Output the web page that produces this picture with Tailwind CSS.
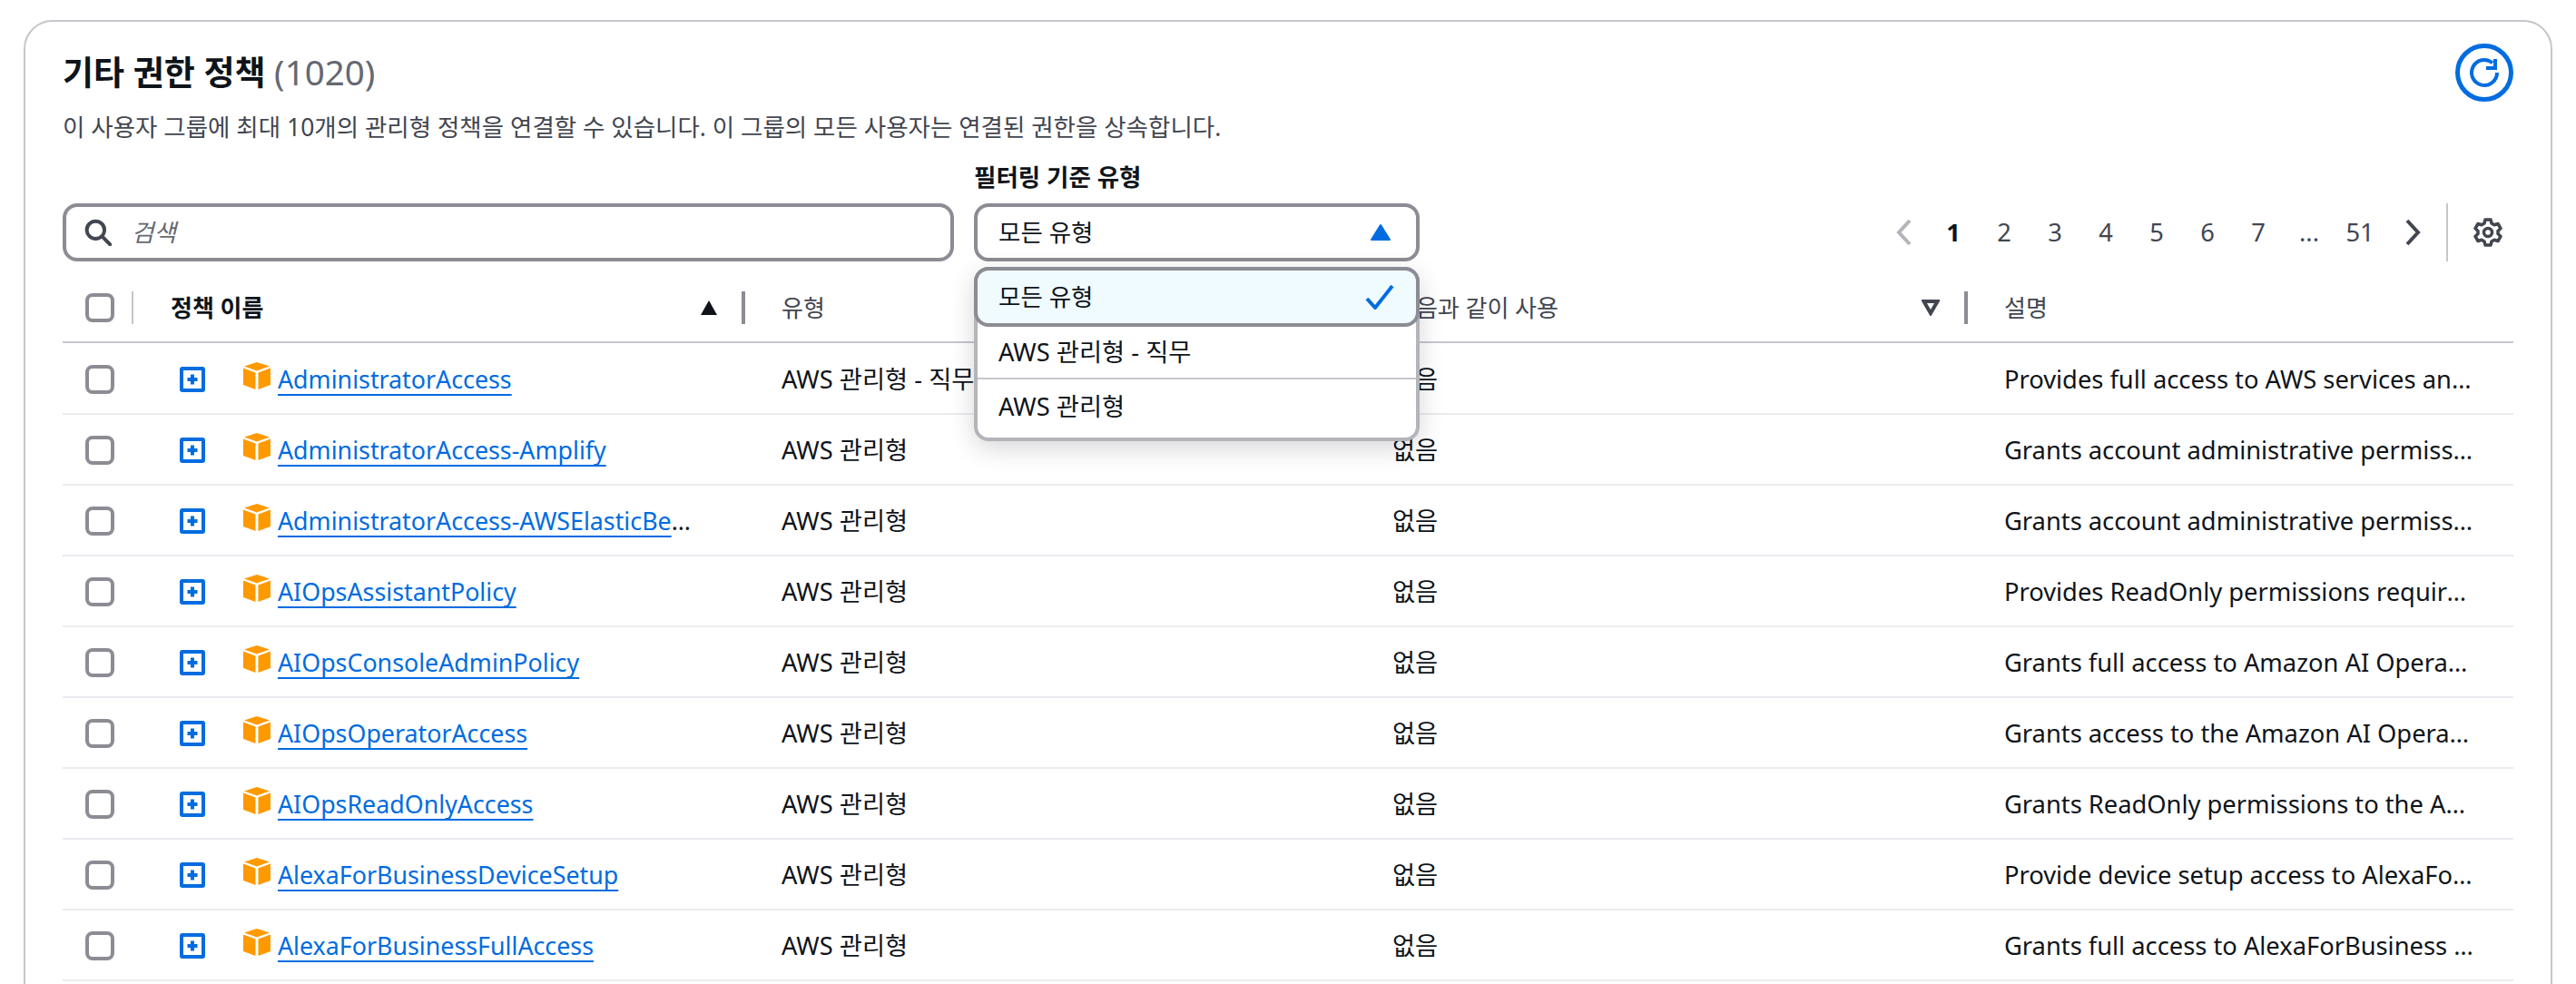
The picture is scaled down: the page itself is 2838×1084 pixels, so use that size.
<!DOCTYPE html>
<html lang="ko">
<head>
<meta charset="utf-8">
<script src="https://cdn.jsdelivr.net/npm/@tailwindcss/browser@4"></script>
</head>
<body class="bg-white overflow-hidden h-[1084px] font-['Noto_Sans','Noto_Sans_CJK_KR',sans-serif] text-[27.3px] leading-[40px] text-[#0f141a]">
<svg width="0" height="0" class="hidden">
  <symbol id="cube" viewBox="0 0 30 30">
    <polygon points="15,0 29,4.500 15,9.500 1,4.500" fill="#ff9900"/>
    <polygon points="0,6.500 13.500,11.500 13.500,30 0,25" fill="#ff9900"/>
    <polygon points="30,6.500 16.500,11.500 16.500,30 30,25" fill="#ff9900"/>
  </symbol>
  <symbol id="plus" viewBox="0 0 28 28">
    <rect x="2" y="2" width="24" height="24" rx="1" fill="none" stroke="#006ce0" stroke-width="4"/>
    <path d="M14 8.500v11M8.500 14h11" fill="none" stroke="#006ce0" stroke-width="4"/>
  </symbol>
</svg>
<div class="mt-[22px] mx-[26px] w-[2786px] h-[1200px] border-2 border-[#c6c6cd] rounded-[32px] pl-[41px] pr-[41px]">
  <div class="flex justify-between items-start pt-[24px]">
    <div class="mt-[9px]">
      <h2 class="h-[44px] text-[37px] leading-[44px] font-bold">기타 권한 정책 <span class="font-normal text-[38.500px] text-[#656871]">(1020)</span></h2>
      <p class="mt-[19px] text-[26.500px] leading-[40px] text-[#424650]">이 사용자 그룹에 최대 10개의 관리형 정책을 연결할 수 있습니다. 이 그룹의 모든 사용자는 연결된 권한을 상속합니다.</p>
    </div>
    <button class="w-[64px] h-[64px] rounded-full border-[5px] border-[#006ce0] flex items-center justify-center">
      <svg width="34" height="34" viewBox="0 0 34 34" fill="none" stroke="#006ce0" stroke-width="4"><path d="M31 17a14 14 0 1 1-5-10.700"/><path d="M29 2v10H19"/></svg>
    </button>
  </div>
  <div class="flex items-end mt-[15px]">
    <div class="w-[982px] h-[64px] border-4 border-[#8c8c94] rounded-[16px] flex items-center pl-[20px] shrink-0">
      <svg width="30" height="30" viewBox="0 0 34 34" fill="none" stroke="#424650" stroke-width="4.500"><circle cx="14" cy="14" r="11"/><path d="M22 22l10 10" stroke-linecap="round"/></svg>
      <span class="ml-[22px] italic text-[26.500px] text-[#656871]">검색</span>
    </div>
    <div class="ml-[22px] w-[491px] shrink-0 relative">
      <div class="text-[26.500px] leading-[40px] font-bold mb-[9px]">필터링 기준 유형</div>
      <div class="h-[64px] border-4 border-[#8c8c94] rounded-[16px] flex items-center justify-between pl-[23px] pr-[28px]">
        <span class="text-[26.500px]">모든 유형</span>
        <svg width="22" height="18" viewBox="0 0 22 18"><path d="M11 1L21 17H1z" fill="#006ce0" stroke="#006ce0" stroke-linejoin="round" stroke-width="2"/></svg>
      </div>
      <div class="absolute left-0 right-0 top-[119px] z-10 h-[192px] bg-white border-4 border-[#b4b4bb] rounded-[16px] shadow-[0_8px_28px_rgba(0,7,22,0.16)]">
        <div class="-mx-[4px] -mt-[4px] h-[66px] bg-[#f0fbff] border-4 border-[#8c8c94] rounded-[16px] flex items-center justify-between pl-[23px] pr-[24px]">
          <span class="text-[26.500px]">모든 유형</span>
          <svg width="32" height="28" viewBox="0 0 32 28" fill="none" stroke="#006ce0" stroke-width="4"><path d="M2 16l9 10L30 2"/></svg>
        </div>
        <div class="h-[58px] border-b-2 border-[#c6c6cd] flex items-center pl-[23px]">AWS 관리형 - 직무</div>
        <div class="h-[58px] pt-[2px] flex items-center pl-[23px]">AWS 관리형</div>
      </div>
    </div>
    <div class="flex-1 h-[64px] flex items-center justify-end text-[#424650]">
      <div class="flex items-center">
        <svg width="20" height="32" viewBox="0 0 20 32" fill="none" stroke="#b4b4bb" stroke-width="4" class="mr-[16px]"><path d="M16 3L4 16l12 13"/></svg>
        <span class="w-[56px] text-center font-bold text-[#0f141a]">1</span>
        <span class="w-[56px] text-center">2</span>
        <span class="w-[56px] text-center">3</span>
        <span class="w-[56px] text-center">4</span>
        <span class="w-[56px] text-center">5</span>
        <span class="w-[56px] text-center">6</span>
        <span class="w-[56px] text-center">7</span>
        <span class="w-[56px] text-center">...</span>
        <span class="w-[56px] text-center">51</span>
        <svg width="20" height="32" viewBox="0 0 20 32" fill="none" stroke="#424650" stroke-width="4" class="ml-[20px]"><path d="M4 3l12 13L4 29"/></svg>
      </div>
      <div class="w-[2px] h-[64px] bg-[#c6c6cd] ml-[27px]"></div>
      <svg width="32" height="32" viewBox="0 0 32 32" fill="none" stroke="#424650" stroke-width="3.500" stroke-linejoin="round" class="ml-[28px] mr-[12px]"><circle cx="16" cy="16" r="4.500"/><path d="M13 2h6l1 4 3 1.700 4-1.200 3 5.100-3 2.900v3l3 2.900-3 5.100-4-1.200-3 1.700-1 4h-6l-1-4-3-1.700-4 1.200-3-5.100 3-2.900v-3l-3-2.900 3-5.100 4 1.200 3-1.700z"/></svg>
    </div>
  </div>
  <div class="mt-[13px] h-[75px] box-content border-b-2 border-[#c6c6cd] flex items-center font-bold">
    <div class="w-[78px] shrink-0 h-[36px] flex items-center pl-[25px] border-r-2 border-[#c6c6cd]">
      <span class="block w-[32px] h-[32px] border-4 border-[#8c8c94] rounded-[8px]"></span>
    </div>
    <div class="w-[674px] shrink-0 h-[36px] flex items-center justify-between pl-[41px] pr-[26px] border-r-4 border-[#8c8c94] text-[26px]">
      <span>정책 이름</span>
      <svg width="20" height="18" viewBox="0 0 20 18"><path d="M10 1l9 16H1z" fill="#0f141a"/></svg>
    </div>
    <div class="w-[673px] shrink-0 h-[36px] flex items-center pl-[40px] text-[26px] font-normal text-[#424650]">유형</div>
    <div class="w-[674px] shrink-0 h-[36px] flex items-center justify-between pl-[42px] pr-[27px] border-r-4 border-[#8c8c94] text-[26px] font-normal text-[#424650]">
      <span>다음과 같이 사용</span>
      <svg width="20" height="18" viewBox="0 0 20 18" fill="none" stroke="#424650" stroke-width="4"><path d="M2.500 2h15L10 15z"/></svg>
    </div>
    <div class="pl-[40px] text-[26px] font-normal text-[#424650]">설명</div>
  </div>

  <div class="h-[79px] pt-[2px] border-b-2 border-[#ebebf0] flex items-center"><div class="w-[76px] shrink-0 pl-[25px]"><span class="block w-[32px] h-[32px] border-4 border-[#8c8c94] rounded-[8px]"></span></div><svg width="28" height="28" class="ml-[53px] shrink-0"><use href="#plus"/></svg><svg width="30" height="30" class="ml-[42px] -mt-[8px] shrink-0"><use href="#cube"/></svg><div class="w-[467px] ml-[8px] shrink-0 truncate text-[26.800px]"><span class="text-[#006ce0] underline underline-offset-[6px] decoration-2">AdministratorAccess</span></div><div class="w-[673px] ml-[88px] shrink-0 truncate pr-[40px]">AWS 관리형 - 직무</div><div class="w-[674px] shrink-0">없음</div><div class="flex-1 min-w-0 truncate pr-[42px]">Provides full access to AWS services and resources.</div></div>
  <div class="h-[78px] pt-[2px] border-b-2 border-[#ebebf0] flex items-center"><div class="w-[76px] shrink-0 pl-[25px]"><span class="block w-[32px] h-[32px] border-4 border-[#8c8c94] rounded-[8px]"></span></div><svg width="28" height="28" class="ml-[53px] shrink-0"><use href="#plus"/></svg><svg width="30" height="30" class="ml-[42px] -mt-[8px] shrink-0"><use href="#cube"/></svg><div class="w-[467px] ml-[8px] shrink-0 truncate text-[26.800px]"><span class="text-[#006ce0] underline underline-offset-[6px] decoration-2">AdministratorAccess-Amplify</span></div><div class="w-[673px] ml-[88px] shrink-0 truncate pr-[40px]">AWS 관리형</div><div class="w-[674px] shrink-0">없음</div><div class="flex-1 min-w-0 truncate pr-[42px]">Grants account administrative permissions while</div></div>
  <div class="h-[78px] pt-[2px] border-b-2 border-[#ebebf0] flex items-center"><div class="w-[76px] shrink-0 pl-[25px]"><span class="block w-[32px] h-[32px] border-4 border-[#8c8c94] rounded-[8px]"></span></div><svg width="28" height="28" class="ml-[53px] shrink-0"><use href="#plus"/></svg><svg width="30" height="30" class="ml-[42px] -mt-[8px] shrink-0"><use href="#cube"/></svg><div class="w-[467px] ml-[8px] shrink-0 truncate text-[26.800px]"><span class="text-[#006ce0] underline underline-offset-[6px] decoration-2">AdministratorAccess-AWSElasticBeanstalk</span></div><div class="w-[673px] ml-[88px] shrink-0 truncate pr-[40px]">AWS 관리형</div><div class="w-[674px] shrink-0">없음</div><div class="flex-1 min-w-0 truncate pr-[42px]">Grants account administrative permissions</div></div>
  <div class="h-[78px] pt-[2px] border-b-2 border-[#ebebf0] flex items-center"><div class="w-[76px] shrink-0 pl-[25px]"><span class="block w-[32px] h-[32px] border-4 border-[#8c8c94] rounded-[8px]"></span></div><svg width="28" height="28" class="ml-[53px] shrink-0"><use href="#plus"/></svg><svg width="30" height="30" class="ml-[42px] -mt-[8px] shrink-0"><use href="#cube"/></svg><div class="w-[467px] ml-[8px] shrink-0 truncate text-[26.800px]"><span class="text-[#006ce0] underline underline-offset-[6px] decoration-2">AIOpsAssistantPolicy</span></div><div class="w-[673px] ml-[88px] shrink-0 truncate pr-[40px]">AWS 관리형</div><div class="w-[674px] shrink-0">없음</div><div class="flex-1 min-w-0 truncate pr-[42px]">Provides ReadOnly permissions required by the</div></div>
  <div class="h-[78px] pt-[2px] border-b-2 border-[#ebebf0] flex items-center"><div class="w-[76px] shrink-0 pl-[25px]"><span class="block w-[32px] h-[32px] border-4 border-[#8c8c94] rounded-[8px]"></span></div><svg width="28" height="28" class="ml-[53px] shrink-0"><use href="#plus"/></svg><svg width="30" height="30" class="ml-[42px] -mt-[8px] shrink-0"><use href="#cube"/></svg><div class="w-[467px] ml-[8px] shrink-0 truncate text-[26.800px]"><span class="text-[#006ce0] underline underline-offset-[6px] decoration-2">AIOpsConsoleAdminPolicy</span></div><div class="w-[673px] ml-[88px] shrink-0 truncate pr-[40px]">AWS 관리형</div><div class="w-[674px] shrink-0">없음</div><div class="flex-1 min-w-0 truncate pr-[42px]">Grants full access to Amazon AI Operations</div></div>
  <div class="h-[78px] pt-[2px] border-b-2 border-[#ebebf0] flex items-center"><div class="w-[76px] shrink-0 pl-[25px]"><span class="block w-[32px] h-[32px] border-4 border-[#8c8c94] rounded-[8px]"></span></div><svg width="28" height="28" class="ml-[53px] shrink-0"><use href="#plus"/></svg><svg width="30" height="30" class="ml-[42px] -mt-[8px] shrink-0"><use href="#cube"/></svg><div class="w-[467px] ml-[8px] shrink-0 truncate text-[26.800px]"><span class="text-[#006ce0] underline underline-offset-[6px] decoration-2">AIOpsOperatorAccess</span></div><div class="w-[673px] ml-[88px] shrink-0 truncate pr-[40px]">AWS 관리형</div><div class="w-[674px] shrink-0">없음</div><div class="flex-1 min-w-0 truncate pr-[42px]">Grants access to the Amazon AI Operations</div></div>
  <div class="h-[78px] pt-[2px] border-b-2 border-[#ebebf0] flex items-center"><div class="w-[76px] shrink-0 pl-[25px]"><span class="block w-[32px] h-[32px] border-4 border-[#8c8c94] rounded-[8px]"></span></div><svg width="28" height="28" class="ml-[53px] shrink-0"><use href="#plus"/></svg><svg width="30" height="30" class="ml-[42px] -mt-[8px] shrink-0"><use href="#cube"/></svg><div class="w-[467px] ml-[8px] shrink-0 truncate text-[26.800px]"><span class="text-[#006ce0] underline underline-offset-[6px] decoration-2">AIOpsReadOnlyAccess</span></div><div class="w-[673px] ml-[88px] shrink-0 truncate pr-[40px]">AWS 관리형</div><div class="w-[674px] shrink-0">없음</div><div class="flex-1 min-w-0 truncate pr-[42px]">Grants ReadOnly permissions to the Amazon AI</div></div>
  <div class="h-[78px] pt-[2px] border-b-2 border-[#ebebf0] flex items-center"><div class="w-[76px] shrink-0 pl-[25px]"><span class="block w-[32px] h-[32px] border-4 border-[#8c8c94] rounded-[8px]"></span></div><svg width="28" height="28" class="ml-[53px] shrink-0"><use href="#plus"/></svg><svg width="30" height="30" class="ml-[42px] -mt-[8px] shrink-0"><use href="#cube"/></svg><div class="w-[467px] ml-[8px] shrink-0 truncate text-[26.800px]"><span class="text-[#006ce0] underline underline-offset-[6px] decoration-2">AlexaForBusinessDeviceSetup</span></div><div class="w-[673px] ml-[88px] shrink-0 truncate pr-[40px]">AWS 관리형</div><div class="w-[674px] shrink-0">없음</div><div class="flex-1 min-w-0 truncate pr-[42px]">Provide device setup access to AlexaForBusiness</div></div>
  <div class="h-[78px] pt-[2px] border-b-2 border-[#ebebf0] flex items-center"><div class="w-[76px] shrink-0 pl-[25px]"><span class="block w-[32px] h-[32px] border-4 border-[#8c8c94] rounded-[8px]"></span></div><svg width="28" height="28" class="ml-[53px] shrink-0"><use href="#plus"/></svg><svg width="30" height="30" class="ml-[42px] -mt-[8px] shrink-0"><use href="#cube"/></svg><div class="w-[467px] ml-[8px] shrink-0 truncate text-[26.800px]"><span class="text-[#006ce0] underline underline-offset-[6px] decoration-2">AlexaForBusinessFullAccess</span></div><div class="w-[673px] ml-[88px] shrink-0 truncate pr-[40px]">AWS 관리형</div><div class="w-[674px] shrink-0">없음</div><div class="flex-1 min-w-0 truncate pr-[42px]">Grants full access to AlexaForBusiness resources</div></div>
</div>
</body>
</html>
